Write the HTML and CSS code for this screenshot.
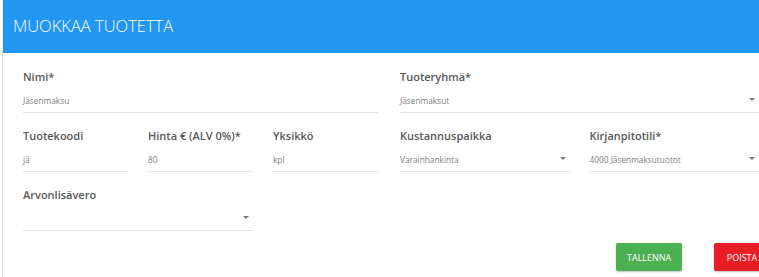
FILE: index.html
```html
<!DOCTYPE html>
<html lang="fi">
<head>
<meta charset="utf-8">
<title>Muokkaa tuotetta</title>
<link rel="stylesheet" href="styles.css">
</head>
<body>
<div class="card">
  <div class="card-header">MUOKKAA TUOTETTA</div>
  <div class="card-body">
    <div class="row">
      <div class="col-left">
        <div class="field">
          <div class="label">Nimi*</div>
          <div class="input">Jäsenmaksu</div>
        </div>
      </div>
      <div class="col-right">
        <div class="field">
          <div class="label">Tuoteryhmä*</div>
          <div class="input select">Jäsenmaksut<span class="caret"></span></div>
        </div>
      </div>
    </div>
    <div class="row">
      <div class="col-left grid3">
        <div class="field">
          <div class="label">Tuotekoodi</div>
          <div class="input">jä</div>
        </div>
        <div class="field">
          <div class="label">Hinta € (ALV 0%)*</div>
          <div class="input">80</div>
        </div>
        <div class="field">
          <div class="label">Yksikkö</div>
          <div class="input">kpl</div>
        </div>
      </div>
      <div class="col-right grid2">
        <div class="field">
          <div class="label">Kustannuspaikka</div>
          <div class="input select">Varainhankinta<span class="caret"></span></div>
        </div>
        <div class="field">
          <div class="label">Kirjanpitotili*</div>
          <div class="input select">4000 Jäsenmaksutuotot<span class="caret"></span></div>
        </div>
      </div>
    </div>
    <div class="row">
      <div class="col-left grid3">
        <div class="field span2">
          <div class="label">Arvonlisävero</div>
          <div class="input select"><span class="caret"></span></div>
        </div>
      </div>
      <div class="col-right"></div>
    </div>
    <div class="actions">
      <button class="btn btn-save">TALLENNA</button>
      <button class="btn btn-delete">POISTA</button>
    </div>
  </div>
</div>
</body>
</html>
```

FILE: styles.css
```css
html, body {
  margin: 0;
  padding: 0;
  overflow: hidden;
  background: #ffffff;
}

body {
  font-family: "Open Sans", "Noto Sans", sans-serif;
  width: 759px;
  height: 277px;
}

.card {
  margin-left: 2px;
  border-left: 1px solid #e6e6e6;
  width: 800px;
  height: 277px;
  background: #fff;
}

.card-header {
  height: 53px;
  background: #2196f3;
  color: #ffffff;
  font-size: 16.5px;
  font-weight: 300;
  display: flex;
  align-items: center;
  padding-left: 10px;
  padding-bottom: 2px;
  box-sizing: border-box;
}

.card-body {
  padding: 16px 0 0 20px;
  width: 736px;
  display: flex;
  flex-direction: column;
  gap: 15px;
}

.row {
  display: flex;
  gap: 22px;
}

.col-left {
  width: 355px;
  flex: none;
}

.col-right {
  width: 359px;
  flex: none;
}

.grid3 {
  display: grid;
  grid-template-columns: repeat(3, 1fr);
  column-gap: 20px;
}

.grid2 {
  display: grid;
  grid-template-columns: repeat(2, 1fr);
  column-gap: 20px;
}

.span2 {
  grid-column: span 2;
}

.field {
  display: flex;
  flex-direction: column;
}

.label {
  font-size: 11px;
  font-weight: 600;
  color: #585858;
  line-height: 15px;
  height: 15px;
  white-space: nowrap;
}

.input {
  height: 29px;
  box-sizing: border-box;
  border-bottom: 1px solid #e3e3e3;
  display: flex;
  align-items: flex-end;
  padding-bottom: 5px;
  font-size: 8.3px;
  line-height: 12px;
  color: #808080;
  position: relative;
}

.select {
  padding-right: 14px;
}

.caret {
  position: absolute;
  right: 4px;
  bottom: 11px;
  width: 0;
  height: 0;
  border-left: 3px solid transparent;
  border-right: 3px solid transparent;
  border-top: 3px solid #777777;
}

.actions {
  display: flex;
  justify-content: flex-end;
  gap: 32px;
  margin-top: -3px;
  width: 747px;
}

.btn {
  height: 28px;
  border: none;
  border-radius: 2px;
  color: #ffffff;
  font-family: "Open Sans", "Noto Sans", sans-serif;
  font-size: 9px;
  padding: 0 11px;
  box-shadow: 0 1px 2px rgba(0, 0, 0, 0.25);
}

.btn-save {
  background: #4caf50;
  width: 66px;
}

.btn-delete {
  background: #e91e24;
  width: 56px;
}
```
